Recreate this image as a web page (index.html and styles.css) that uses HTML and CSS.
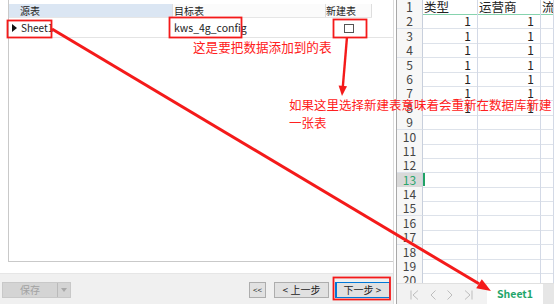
FILE: index.html
```html
<!DOCTYPE html>
<html lang="zh-CN">
<head>
  <meta charset="UTF-8">
  <title>导入向导</title>
  <link rel="stylesheet" href="styles.css">
</head>
<body>
  <div class="app">
    <!-- wizard: table mapping -->
    <div class="wizard">
      <div class="map">
        <div class="map-head">
          <div class="col-src">源表</div>
          <div class="col-dst">目标表</div>
          <div class="col-new">新建表</div>
        </div>
        <div class="map-row">
          <div class="col-src"><span class="mark"></span>Sheet1</div>
          <div class="col-dst">kws_4g_config</div>
          <div class="col-new"><span class="check"></span></div>
        </div>
      </div>
      <div class="footer">
        <div class="save"><span class="save-main">保存</span><span class="save-drop"></span></div>
        <div class="nav">
          <button class="btn btn-first">&lt;&lt;</button>
          <button class="btn btn-prev">&lt; 上一步</button>
          <button class="btn btn-next">下一步 &gt;</button>
        </div>
      </div>
    </div>

    <!-- spreadsheet -->
    <div class="sheet">
      <div class="cells">
        <div class="row head"><div class="num">1</div><div class="cell">类型</div><div class="cell">运营商</div><div class="cell">流</div></div>
        <div class="row"><div class="num">2</div><div class="cell val">1</div><div class="cell val">1</div><div class="cell"></div></div>
        <div class="row"><div class="num">3</div><div class="cell val">1</div><div class="cell val">1</div><div class="cell"></div></div>
        <div class="row"><div class="num">4</div><div class="cell val">1</div><div class="cell val">1</div><div class="cell"></div></div>
        <div class="row"><div class="num">5</div><div class="cell val">1</div><div class="cell val">1</div><div class="cell"></div></div>
        <div class="row"><div class="num">6</div><div class="cell val">1</div><div class="cell val">1</div><div class="cell"></div></div>
        <div class="row"><div class="num">7</div><div class="cell val">1</div><div class="cell val">1</div><div class="cell"></div></div>
        <div class="row"><div class="num">8</div><div class="cell val">1</div><div class="cell val">1</div><div class="cell"></div></div>
        <div class="row"><div class="num">9</div><div class="cell"></div><div class="cell"></div><div class="cell"></div></div>
        <div class="row"><div class="num">10</div><div class="cell"></div><div class="cell"></div><div class="cell"></div></div>
        <div class="row"><div class="num">11</div><div class="cell"></div><div class="cell"></div><div class="cell"></div></div>
        <div class="row"><div class="num">12</div><div class="cell"></div><div class="cell"></div><div class="cell"></div></div>
        <div class="row current"><div class="num">13</div><div class="cell"><span class="caret"></span></div><div class="cell"></div><div class="cell"></div></div>
        <div class="row"><div class="num">14</div><div class="cell"></div><div class="cell"></div><div class="cell"></div></div>
        <div class="row"><div class="num">15</div><div class="cell"></div><div class="cell"></div><div class="cell"></div></div>
        <div class="row"><div class="num">16</div><div class="cell"></div><div class="cell"></div><div class="cell"></div></div>
        <div class="row"><div class="num">17</div><div class="cell"></div><div class="cell"></div><div class="cell"></div></div>
        <div class="row"><div class="num">18</div><div class="cell"></div><div class="cell"></div><div class="cell"></div></div>
        <div class="row"><div class="num">19</div><div class="cell"></div><div class="cell"></div><div class="cell"></div></div>
        <div class="row"><div class="num">20</div><div class="cell"></div><div class="cell"></div><div class="cell"></div></div>
      </div>
      <div class="tabs">
        <div class="tab-nav">
          <svg width="9" height="10" viewBox="0 0 9 10"><path d="M1 0.5V9.5M8 0.5L3 5L8 9.5" fill="none" stroke="#bdbdbd" stroke-width="1"/></svg>
          <svg width="6" height="10" viewBox="0 0 6 10"><path d="M5.5 0.5L1 5L5.5 9.5" fill="none" stroke="#bdbdbd" stroke-width="1"/></svg>
          <svg width="6" height="10" viewBox="0 0 6 10"><path d="M0.5 0.5L5 5L0.5 9.5" fill="none" stroke="#bdbdbd" stroke-width="1"/></svg>
          <svg width="9" height="10" viewBox="0 0 9 10"><path d="M8 0.5V9.5M1 0.5L6 5L1 9.5" fill="none" stroke="#bdbdbd" stroke-width="1"/></svg>
        </div>
        <div class="tab">Sheet1</div>
        <div class="tab-rest"></div>
      </div>
    </div>
  </div>

  <!-- red annotations drawn over the screenshot -->
  <div class="annot">
    <svg class="marks" width="554" height="304" viewBox="0 0 554 304">
      <g fill="none" stroke="#f41a1a" stroke-width="1.8">
        <rect x="7.5" y="20.5" width="44" height="17"/>
        <rect x="169.5" y="17.5" width="72" height="20"/>
        <rect x="333.5" y="19.5" width="33" height="18"/>
        <rect x="333.5" y="277.5" width="56.5" height="22"/>
      </g>
      <line x1="52" y1="29" x2="479" y2="283.8" stroke="#f41a1a" stroke-width="3"/>
      <polygon points="491,291 476.2,288.3 481.8,279.3" fill="#f41a1a"/>
      <line x1="347" y1="37" x2="342.9" y2="86" stroke="#f41a1a" stroke-width="2.4"/>
      <polygon points="342,96 347,86.3 338.6,85.6" fill="#f41a1a"/>
    </svg>
    <div class="note note-dst">这是要把数据添加到的表</div>
    <div class="note note-new">如果这里选择新建表意味着会重新在数据库新建<br>一张表</div>
  </div>
</body>
</html>
```

FILE: styles.css
```css
body {
  margin: 0;
  padding: 0;
  font-family: 'Noto Sans CJK SC', 'Noto Sans', sans-serif;
  color: #222;
  background: white;
}
.app {
  position: relative;
  display: flex;
  width: 554px;
  height: 304px;
  overflow: hidden;
}

/* wizard side */
.wizard {
  width: 393px;
  display: flex;
  flex-direction: column;
  border-right: 1px solid #dcdcdc;
  flex-shrink: 0;
}
.map {
  height: 262px;
  margin-left: 8px;
  padding-top: 4px;
  box-sizing: border-box;
  border-left: 1px solid #c9c9c9;
  border-bottom: 1px solid #c9c9c9;
  font-size: 10px;
}
.map-head, .map-row {
  display: flex;
}
.map-head {
  height: 14px;
  line-height: 14px;
  background: #fbfbfb;
  border-bottom: 1px solid #e6e6e6;
  box-sizing: border-box;
  width: 363px;
}
.map-head .col-src {
  background: #dbe6f3;
  padding-left: 11px;
}
.map-head div {
  border-right: 1px solid #dedede;
}
.col-src {
  width: 164px;
  box-sizing: border-box;
}
.col-dst {
  width: 153px;
  box-sizing: border-box;
  padding-left: 1px;
}
.col-new {
  width: 46px;
  box-sizing: border-box;
}
.map-row {
  height: 20px;
  line-height: 19px;
  border-bottom: 1px solid #e4e4e4;
  box-sizing: border-box;
}
.map-row .col-src {
  display: flex;
  align-items: center;
  padding-left: 3px;
}
.map-row .col-dst {
  font-size: 10.5px;
}
.mark {
  width: 0;
  height: 0;
  border-top: 4px solid transparent;
  border-bottom: 4px solid transparent;
  border-left: 5px solid #111;
  margin-right: 4px;
}
.map-row .col-new {
  display: flex;
  justify-content: center;
  align-items: center;
}
.check {
  width: 10px;
  height: 9px;
  border: 1px solid #555;
  box-sizing: border-box;
  background: white;
  margin-top: 2px;
}

.footer {
  margin-top: 11px;
  flex: 1;
  background: #f0f0f0;
  border-top: 1px solid #e6e6e6;
  display: flex;
  justify-content: space-between;
  align-items: flex-start;
  padding-top: 8px;
  box-sizing: border-box;
}
.save {
  display: flex;
  margin-left: 2px;
  height: 16px;
  background: #d4d4d4;
  border: 1px solid #c8c8c8;
  box-sizing: border-box;
}
.save-main {
  width: 54px;
  text-align: center;
  font-size: 10px;
  line-height: 14px;
  color: #a2a2a2;
  border-right: 1px solid #bababa;
}
.save-drop {
  width: 12px;
  position: relative;
}
.save-drop::after {
  content: '';
  position: absolute;
  left: 3px;
  top: 5px;
  border-left: 3px solid transparent;
  border-right: 3px solid transparent;
  border-top: 4px solid #a8a8a8;
}
.nav {
  display: flex;
  margin-right: 3px;
}
.btn {
  height: 16px;
  padding: 0;
  margin: 0 0 0 8px;
  background: #e1e1e1;
  border: 1px solid #adadad;
  font-family: inherit;
  font-size: 10px;
  line-height: 14px;
  color: #222;
  box-sizing: border-box;
}
.btn-first {
  width: 17px;
  font-size: 8px;
  margin-left: 0;
}
.btn-prev {
  width: 55px;
}
.btn-next {
  width: 55px;
  margin-left: 6px;
  border-color: #0078d7;
  box-shadow: inset 1px 0 0 #0078d7;
}

/* spreadsheet side */
.sheet {
  margin-left: 2px;
  flex: 1;
  border-left: 1px solid #a8a8a8;
  display: flex;
  flex-direction: column;
  min-width: 0;
}
.cells {
  height: 283px;
  overflow: hidden;
}
.row {
  display: grid;
  grid-template-columns: 26px 55px 63px 1fr;
  height: 14.4px;
  font-size: 12px;
  line-height: 14px;
}
.num {
  background: #f7f7f7;
  text-align: center;
  color: #444;
  border-right: 1px solid #c8cfdc;
  border-bottom: 1px solid #dde2ea;
  box-sizing: border-box;
}
.cell {
  border-right: 1px solid #d3d9e6;
  border-bottom: 1px solid #dde2ea;
  box-sizing: border-box;
  padding: 0 1px;
  white-space: nowrap;
  overflow: hidden;
}
.val {
  text-align: right;
  padding-right: 6px;
}
.row.head .num, .row.head .cell {
  border-bottom-color: #86d3ae;
  font-size: 12.5px;
}
.row.current .num {
  background: #d9d9d9;
  color: #2ba56c;
}
.caret {
  display: block;
  width: 2px;
  height: 13px;
  background: #21a366;
  margin-left: -1px;
}
.tabs {
  flex: 1;
  display: flex;
  background: #f2f2f2;
  border-top: 1px solid #e0e0e0;
}
.tab-nav {
  width: 90px;
  display: flex;
  align-items: center;
  gap: 11px;
  padding-left: 13px;
  box-sizing: border-box;
  padding-top: 1px;
}
.tab {
  width: 56px;
  background: white;
  color: #1fa56a;
  font-weight: bold;
  font-size: 10.5px;
  line-height: 20px;
  text-align: center;
}
.tab-rest {
  flex: 1;
  background: #e6e6e6;
}

/* annotations */
.annot {
  position: absolute;
  left: 0;
  top: 0;
  width: 554px;
  height: 304px;
  pointer-events: none;
}
.marks {
  position: absolute;
  left: 0;
  top: 0;
}
.note {
  position: absolute;
  color: #ff2020;
  white-space: nowrap;
}
.note-dst {
  left: 193px;
  top: 39px;
  font-size: 12.6px;
  line-height: 16px;
}
.note-new {
  left: 289px;
  top: 96px;
  font-size: 12.5px;
  line-height: 18px;
}
```
